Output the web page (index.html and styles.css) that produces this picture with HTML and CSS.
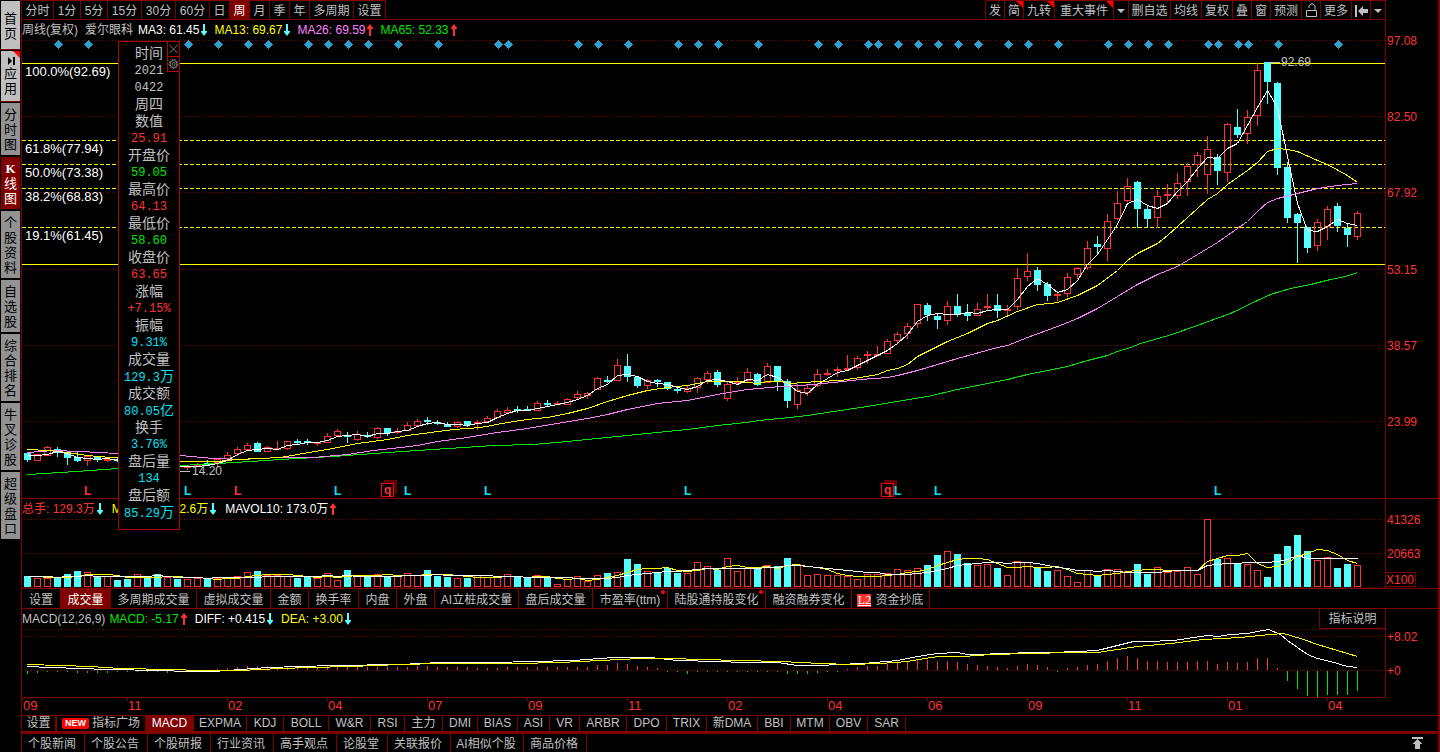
FILE: index.html
```html
<!DOCTYPE html>
<html lang="zh-CN">
<head>
<meta charset="utf-8">
<title>爱尔眼科 周线</title>
<link rel="stylesheet" href="styles.css">
</head>
<body>
<svg class="defs" aria-hidden="true">
  <symbol id="down" viewBox="0 0 7 12"><path d="M3 0h2v7h2v1l-3 4-3-4V7h2z" fill="#54ffff"/></symbol>
  <symbol id="up" viewBox="0 0 7 12"><path d="M3 12h2V5h2V4L4 0 1 4v1h2z" fill="#ff3232"/></symbol>
</svg>
<div class="app">
  <nav class="side">
    <button class="light">首页</button>
    <button class="light flag"><svg class="play" viewBox="0 0 8 8"><path d="M1 0l4 4-4 4zM6 0h2v8H6z"/></svg>应用</button>
    <button>分时图</button>
    <button class="on"><b>K</b>线图</button>
    <button>个股资料</button>
    <button>自选股</button>
    <button>综合排名</button>
    <button>牛叉诊股</button>
    <button>超级盘口</button>
  </nav>
  <main class="main">
    <header class="bar">
      <div class="periods">
        <button>分时</button><button>1分</button><button>5分</button><button>15分</button><button>30分</button><button>60分</button><button>日</button><button class="on">周</button><button>月</button><button>季</button><button>年</button><button>多周期</button><button>设置</button>
      </div>
      <div class="tools">
        <button>发</button><button class="flag">简</button><button class="flag">九转</button><button class="flag">重大事件</button><button aria-label="展开"><i class="caret"></i></button><button>删自选</button><button>均线</button><button>复权</button><button>叠</button><button>窗</button><button>预测</button><button aria-label="锁定"><svg width="13" height="15" viewBox="0 0 13 15"><path d="M4 5V3l2-2h2l2 2v5M1.500 7.500h10v6h-10z" fill="none" stroke="#c0c0c0"/></svg></button><button>更多</button><button aria-label="收起"><svg width="13" height="12" viewBox="0 0 13 12"><path d="M0 0h2v12H0zM3 6l5-5v3h5v4H8v3z" fill="#c0c0c0"/></svg></button><button aria-label="菜单"><i class="caret"></i></button>
      </div>
    </header>
    <div class="head ma">
      <span class="title">周线(复权)</span><span class="name">爱尔眼科</span>
      <span class="white">MA3: 61.45<svg><use href="#down"/></svg></span>
      <span class="yellow">MA13: 69.67<svg><use href="#down"/></svg></span>
      <span class="pink">MA26: 69.59<svg><use href="#up"/></svg></span>
      <span class="green">MA65: 52.33<svg><use href="#up"/></svg></span>
    </div>
    <div class="pane price"><svg id="price"></svg></div>
    <div class="head vol">
      <span class="red">总手: 129.3万<svg><use href="#down"/></svg></span>
      <span class="yellow">MAVOL5: 172.6万<svg><use href="#down"/></svg></span>
      <span class="white">MAVOL10: 173.0万<svg><use href="#up"/></svg></span>
    </div>
    <div class="pane volume"><svg id="volume"></svg></div>
    <div class="tabs first">
      <button>设置</button><button class="on">成交量</button><button>多周期成交量</button><button>虚拟成交量</button><button>金额</button><button>换手率</button><button>内盘</button><button>外盘</button><button>AI立桩成交量</button><button>盘后成交量</button><button class="dot">市盈率(ttm)</button><button class="dot">陆股通持股变化</button><button>融资融券变化</button><button><span class="l2">L2</span>资金抄底</button>
    </div>
    <div class="head osc">
      <span>MACD(12,26,9)</span>
      <span class="green">MACD: -5.17<svg><use href="#up"/></svg></span>
      <span class="white">DIFF: +0.415<svg><use href="#down"/></svg></span>
      <span class="yellow">DEA: +3.00<svg><use href="#down"/></svg></span>
      <button class="help">指标说明</button>
    </div>
    <div class="pane macd"><svg id="macd"></svg></div>
    <div class="tabs second">
      <button>设置</button><button><span class="new">NEW</span>指标广场</button><button class="on">MACD</button><button>EXPMA</button><button>KDJ</button><button>BOLL</button><button>W&amp;R</button><button>RSI</button><button>主力</button><button>DMI</button><button>BIAS</button><button>ASI</button><button>VR</button><button>ARBR</button><button>DPO</button><button>TRIX</button><button>新DMA</button><button>BBI</button><button>MTM</button><button>OBV</button><button>SAR</button>
    </div>
    <footer class="foot">
      <div class="news">
        <button>个股新闻</button><button>个股公告</button><button>个股研报</button><button>行业资讯</button><button>高手观点</button><button>论股堂</button><button>关联报价</button><button>AI相似个股</button><button>商品价格</button>
      </div>
      <button class="totop" aria-label="展开面板"><svg width="11" height="12" viewBox="0 0 11 12"><path d="M0 0h11v2H0zM5.500 2l5 5H8v5H3V7H.5z" fill="#c0c0c0"/></svg></button>
    </footer>
    <aside class="popup">
      <div class="corner">
        <button aria-label="关闭"><svg width="11" height="12" viewBox="0 0 11 12"><path d="M1.500 2l8 8M9.500 2l-8 8" stroke="#808080"/></svg></button>
        <button aria-label="设置"><svg width="11" height="12" viewBox="0 0 11 12" fill="none" stroke="#808080"><circle cx="5.500" cy="6" r="4.500" stroke-dasharray="2 1"/><circle cx="5.500" cy="6" r="3.500"/><circle cx="5.500" cy="6" r="1.500"/></svg></button>
      </div>
      <p>时间</p><p class="num">2021</p><p class="num">0422</p><p>周四</p>
      <p>数值</p><p class="num red">25.91</p>
      <p>开盘价</p><p class="num green">59.05</p>
      <p>最高价</p><p class="num red">64.13</p>
      <p>最低价</p><p class="num green">58.60</p>
      <p>收盘价</p><p class="num red">63.65</p>
      <p>涨幅</p><p class="num red">+7.15%</p>
      <p>振幅</p><p class="num cyan">9.31%</p>
      <p>成交量</p><p class="num cyan">129.3<span>万</span></p>
      <p>成交额</p><p class="num cyan">80.05<span>亿</span></p>
      <p>换手</p><p class="num cyan">3.76%</p>
      <p>盘后量</p><p class="num cyan">134</p>
      <p>盘后额</p><p class="num cyan">85.29<span>万</span></p>
    </aside>
  </main>
</div>
<script src="chart.js"></script>
</body>
</html>
```

FILE: styles.css
```css
* { box-sizing: border-box; }
body {
  margin: 0;
  background: #000;
  color: #c0c0c0;
  font: 12px/16px "Liberation Sans", "Noto Sans CJK SC", sans-serif;
}
.defs { position: absolute; width: 0; height: 0; }
button {
  margin: 0;
  padding: 0;
  border: 0;
  background: none;
  color: inherit;
  font: inherit;
  white-space: nowrap;
}
.app {
  display: flex;
  min-height: 100vh;
  border-right: 2px solid #800000;
}

/* sidebar */
.side {
  width: 21px;
  flex: none;
  display: flex;
  flex-direction: column;
  gap: 2px;
  padding: 1px 1px 0;
}
.side button {
  display: flex;
  flex-direction: column;
  align-items: center;
  width: 19px;
  padding: 4px 3px 3px;
  background: #929292;
  color: #000;
  font-size: 13px;
  line-height: 15px;
  white-space: normal;
  word-break: break-all;
}
.side button.light { background: #c0c0c0; padding: 10px 3px 8px; box-shadow: 0 1px #800000; }
.side button.light.flag { padding: 6px 3px 5px; }
.side button.on { background: #800000; color: #fff; }
.side b { font: bold 13px/15px "Liberation Serif", serif; }
.play { width: 8px; height: 8px; margin: 0 0 1px; }
.flag { position: relative; }
.flag::after {
  content: "";
  position: absolute;
  top: 0;
  right: 0;
  border-top: 7px solid #ff0000;
  border-left: 7px solid transparent;
}

.main {
  position: relative;
  flex: 1;
  min-width: 0;
  display: flex;
  flex-direction: column;
  border-left: 1px solid #800000;
}

/* top toolbar */
.bar {
  display: flex;
  justify-content: space-between;
  height: 20px;
  padding-right: 52px;
}
.periods, .tools { display: grid; border-bottom: 1px solid #800000; }
.periods {
  flex: 1;
  grid-template-columns: 32px 27px 27px 34px 34px 34px 20px 20px 20px 20px 20px 44px 32px;
}
.tools {
  grid-template-columns: 20px 19px 31px 59px 15px 42px 31px 31px 19px 19px 31px 19px 31px 19px 15px;
}
.bar button {
  display: flex;
  align-items: center;
  justify-content: center;
  padding-top: 1px;
  border-top: 1px solid #800000;
  border-right: 1px solid #800000;
}
.tools button:first-child { border-left: 1px solid #800000; }
.bar .on, .tabs .on { background: #800000; color: #fff; }
.caret {
  border: 4px solid transparent;
  border-top-color: #c0c0c0;
  border-bottom: 0;
}

/* readouts */
.head { display: flex; align-items: center; gap: 8px; white-space: nowrap; }
.head span { display: flex; align-items: center; gap: 1px; }
.head svg { width: 7px; height: 12px; }
.ma { height: 20px; gap: 7px; margin-right: 52px; border-right: 1px solid #800000; }
.ma .name { margin-right: -2px; }
.vol { height: 19px; gap: 9px; padding-top: 2px; border-top: 1px solid #800000; }
.osc { height: 21px; border-top: 1px solid #800000; }
.osc span:first-child { margin-right: -4px; }
.osc .help {
  align-self: stretch;
  width: 67px;
  margin-left: auto;
  margin-right: 52px;
  border: 1px solid #800000;
  border-top: 0;
}
.white { color: #fff; }
.yellow { color: #ffff00; }
.pink { color: #ff80ff; }
.green { color: #00e600; }
.red { color: #ff3232; }
.cyan { color: #02e2f4; }

/* plots */
.pane { min-height: 0; position: relative; }
.pane svg { position: absolute; inset: 0; width: 100%; height: 100%; overflow: visible; }
.price { flex: 458 1 0; }
.volume { flex: 71 1 0; }
.macd { flex: 86 1 0; }
.pane svg text { font-size: 12px; }
.pane svg text.level { font-size: 13px; }

/* indicator tabs */
.tabs { display: grid; border-top: 1px solid #800000; }
.tabs button { position: relative; border-right: 1px solid #800000; }
.first {
  height: 20px;
  grid-template-columns: 39px 50px 86px 74px 38px 50px 38px 38px 84px 74px 75px 98px 86px 78px;
}
.first button { padding-top: 2px; }
.second {
  height: 19px;
  border-bottom: 3px solid #800000;
  grid-template-columns: 35px 89px 48px 53px 37px 45px 42px 34px 38px 35px 40px 32px 30px 47px 40px 40px 51px 33px 39px 38px 38px;
}
.second button { line-height: 15px; }
.second button:first-child { border-right-width: 2px; }
.dot::after {
  content: "";
  position: absolute;
  top: 1px;
  right: 2px;
  width: 4px;
  height: 4px;
  border-radius: 50%;
  background: #ff0000;
}
.l2 {
  display: inline-block;
  width: 14px;
  margin-right: 4px;
  background: #ff3232;
  color: #fff;
  font-family: "Liberation Serif", serif;
  line-height: 13px;
  text-decoration: underline;
}
.new {
  display: inline-block;
  width: 27px;
  margin-right: 3px;
  border-radius: 2px;
  background: #ff0000;
  color: #fff;
  font: bold 9px/11px "Liberation Sans", sans-serif;
  vertical-align: 1px;
}

.foot { display: flex; justify-content: space-between; height: 18px; }
.news {
  display: grid;
  grid-template-columns: 63px 63px 63px 63px 63px 51px 63px 73px 63px;
}
.news button { padding: 2px 2px 0 0; border-right: 1px solid #800000; }
.totop { display: flex; align-items: center; margin-right: 15px; }

/* floating day readout */
.popup {
  position: absolute;
  left: 96px;
  top: 41px;
  width: 62px;
  padding: 3px 0 8px;
  border: 1px solid #b40000;
  background: #000;
  text-align: center;
}
.popup p { margin: 0; font-size: 14px; line-height: 17px; height: 17px; }
.popup .num { font-family: "Liberation Mono", "Noto Sans CJK SC", monospace; font-size: 12px; line-height: 19px; }
.popup .num span { font-size: 14px; }
.corner {
  position: absolute;
  top: -1px;
  right: -1px;
  display: flex;
  flex-direction: column;
}
.corner button {
  display: flex;
  padding: 1px 0;
  border: 1px solid #b40000;
  margin-bottom: -1px;
}
```

FILE: chart.js
```js
const NS = 'http://www.w3.org/2000/svg';
const X0 = 22, X1 = 1385, FULL = 1416;
const RED = '#ff3232', CYAN = '#54ffff', DARK = '#800000', YELLOW = '#ffff00', PINK = '#ff80ff', GREEN = '#00e600';

/* direction, high, body top, body bottom, low */
const candles = `D 452 453 460 462|U 454 454 460 461|U 446 447 455 456|D 447 449 453 457|D 451 452 458 465|D 451 457 461 462|U 455 456 460 466|D 457 457 460 462|U 457 459 460 462|D 458 459 461 462
D 458 460 462 463|U 459 461 463 464|D 460 461 464 465|D 462 464 466 467|U 463 465 466 468|D 464 465 467 470|U 465 466 467 470|U 463 464 465 466|D 460 463 465 466|U 458 459 462 467
U 452 455 458 460|U 447 449 453 456|U 443 445 449 450|D 442 443 452 452|U 446 447 451 452|U 441 448 448 448|U 441 441 448 450|D 439 441 443 444|D 439 441 442 445|U 442 442 442 446
U 433 436 442 443|U 429 431 435 437|D 432 435 437 443|U 431 434 439 441|D 432 435 437 438|U 427 428 437 439|D 428 428 433 436|U 428 431 432 434|U 422 425 430 430|U 419 421 425 427
D 417 420 422 425|D 420 422 423 425|D 422 424 427 427|U 421 422 426 428|D 421 421 425 427|U 420 422 423 430|U 416 418 421 421|U 409 411 417 418|U 407 410 412 413|D 406 409 410 413
D 406 409 410 411|U 401 403 410 411|D 400 403 405 407|U 401 403 404 405|U 398 399 404 405|U 391 394 397 399|U 392 393 395 399|U 377 378 389 390|D 376 380 381 383|U 359 365 380 381
D 354 366 377 382|D 376 377 386 388|U 379 380 385 389|D 379 380 382 387|D 382 382 389 390|D 387 389 391 393|U 386 388 391 393|U 377 378 387 393|U 371 373 379 384|D 370 372 385 387
U 382 384 398 401|U 377 382 383 385|U 368 372 380 382|D 373 374 385 386|U 363 366 382 383|D 366 366 381 391|D 379 381 401 408|U 384 390 404 409|U 384 388 392 396|U 369 374 385 387
U 369 373 374 376|U 367 369 370 377|U 355 368 369 370|U 356 358 367 370|U 351 354 355 364|U 346 354 354 356|U 339 341 353 354|U 332 334 340 343|U 323 326 333 339|U 304 304 323 328
D 303 305 315 321|D 314 316 320 329|U 301 306 320 325|D 294 306 315 317|D 304 313 316 321|U 303 309 315 316|U 294 306 307 310|D 294 305 311 318|U 305 309 310 315|U 268 278 306 310
U 253 271 276 281|D 267 270 285 291|D 282 284 296 301|U 291 294 295 301|U 273 277 293 297|U 267 268 274 279|U 241 248 267 270|D 236 244 247 254|U 214 221 248 261|U 191 203 218 220
U 178 186 200 202|D 181 182 209 228|D 205 209 219 227|U 190 196 217 228|U 184 194 195 203|U 173 183 195 199|U 163 166 181 196|U 152 155 164 177|U 136 149 174 194|D 154 157 171 185
U 123 124 172 182|D 109 127 135 138|U 110 117 133 144|U 63 70 115 126|D 62 62 82 104|D 82 83 168 175|D 162 167 218 223|D 213 214 223 263|D 227 227 248 253|U 219 222 245 251
U 206 209 226 240|D 203 206 226 232|D 224 228 235 247|U 211 213 236 240`.split(/[|\n]/).map(r => {
  const p = r.split(' ');
  return { up: p[0] === 'U', hi: +p[1], top: +p[2], bot: +p[3], lo: +p[4] };
});

/* volume bar heights */
const volume = [11,9,9,10,13,16,15,10,11,7,8,13,10,13,10,8,8,9,8,9,10,11,15,16,12,12,11,9,10,9,14,7,17,11,11,13,11,12,14,12,17,11,10,9,9,12,10,10,13,10,9,12,9,3,8,11,6,12,14,15,28,23,16,15,19,14,14,25,21,17,29,16,19,19,22,21,29,23,12,13,12,12,11,8,13,13,14,18,17,19,22,32,36,33,24,22,23,19,12,26,25,20,16,17,11,5,17,12,18,18,16,23,13,20,15,16,20,13,68,28,29,23,23,17,10,33,41,52,36,27,30,19,23,22];

/* MACD histogram heights */
const hist = [-3,-2,-1,-1,-1,-2,-2,-2,-2,-1,-1,-1,-1,-1,-2,-1,-1,-1,-1,1,2,3,4,4,4,3,4,3,4,3,4,5,4,4,3,3,3,3,3,4,4,3,3,3,3,2,2,2,3,3,3,3,3,3,3,3,3,5,5,7,6,4,3,2,-1,-1,-3,-1,-1,-1,-1,-1,-1,-1,-1,-1,-3,-3,-3,-2,-1,-1,1,3,4,4,6,7,9,11,10,9,9,8,6,5,4,3,2,4,6,5,3,-1,2,3,5,6,9,12,14,12,9,9,8,8,8,9,9,6,8,7,8,12,12,2,-10,-18,-25,-26,-24,-24,-24,-20];

const lines = {
  ma13: [27,449,47,450,67,452,87,455,110,457,180,461,217,461,237,459,280,457,297,454,327,449,357,443,387,439,407,435,430,432,453,429,480,427,507,422,527,419,547,417,567,413,587,408,607,401,627,395,647,390,667,387,687,385,707,381,737,381,757,383,767,381,780,381,790,383,817,381,840,380,860,377,877,374,887,370,897,368,907,364,917,356,927,351,947,341,967,333,987,323,997,320,1017,311,1037,304,1050,303,1057,302,1077,295,1097,285,1117,270,1127,260,1137,253,1157,243,1167,235,1187,217,1207,199,1217,193,1227,184,1247,170,1257,162,1267,151,1277,148,1287,149,1297,151,1317,160,1327,164,1347,175,1357,182],
  ma26: [27,452,53,450,80,451,117,453,180,455,213,458,240,459,280,457,313,457,347,454,373,450,400,447,417,445,437,441,467,437,497,432,527,428,557,423,587,418,607,414,627,409,657,403,687,400,717,394,747,389,780,386,800,385,833,382,860,379,887,377,897,375,917,370,957,358,997,347,1007,345,1027,337,1057,326,1077,318,1097,308,1117,296,1137,284,1157,274,1177,266,1197,254,1217,242,1247,221,1257,211,1267,202,1277,198,1297,193,1317,188,1337,185,1347,184,1357,183],
  ma65: [27,474,60,472,90,470,118,468,180,465,217,463,250,461,280,459,333,456,373,453,417,450,463,447,493,445,533,444,567,441,607,437,647,433,687,429,717,425,737,423,767,419,780,418,807,415,833,411,867,406,897,401,927,396,957,389,987,383,1007,379,1027,374,1067,366,1087,360,1107,355,1117,351,1130,347,1140,343,1168,335,1197,325,1230,313,1257,300,1270,294,1290,288,1310,284,1330,279,1345,276,1357,272],
  diff: [27,666,50,667,80,668,107,669,160,670,187,671,213,671,240,669,267,667,300,666,333,665,400,664,440,662,480,662,492,662,533,661,573,660,613,657,650,657,677,660,717,661,743,662,777,662,797,665,820,665,837,664,863,663,897,660,917,656,937,653,957,652,967,654,1013,653,1023,652,1050,652,1077,651,1097,650,1113,646,1133,641,1147,641,1173,640,1207,635,1217,636,1230,634,1247,633,1257,631,1268,629,1280,634,1287,640,1297,647,1307,654,1317,658,1330,661,1347,666,1357,667],
  dea: [27,664,60,665,90,666,120,668,170,669,200,670,240,670,280,668,310,667,350,666,400,664,440,663,515,663,560,662,600,660,640,658,670,658,700,659,740,660,780,661,820,663,850,664,880,663,907,661,930,657,940,656,963,656,990,654,1030,653,1070,652,1097,652,1117,649,1137,646,1170,643,1203,639,1240,637,1270,634,1283,633,1300,638,1317,644,1337,650,1357,656]
};
const events = [58,88,188,218,248,268,308,328,348,368,398,438,498,508,578,598,628,678,698,718,758,818,838,868,878,898,918,938,958,978,1008,1028,1058,1108,1128,1148,1168,1208,1218,1238,1248,1278,1338];

const slot = i => 27 + i * 10;

function add(svg, name, attrs, text) {
  const el = document.createElementNS(NS, name);
  for (const k in attrs) el.setAttribute(k, attrs[k]);
  if (text !== undefined) el.textContent = text;
  svg.appendChild(el);
}

/* Scales plot units to the current size of the pane. */
function surface(id, top, height) {
  const svg = document.getElementById(id);
  svg.textContent = '';
  svg.setAttribute('shape-rendering', 'crispEdges');
  const sx = svg.clientWidth / FULL, sy = svg.clientHeight / height;
  const x = v => Math.round((v - X0) * sx), y = v => Math.round((v - top) * sy);
  return {
    rect: (a, b, w, h, fill) => add(svg, 'rect', { x: x(a), y: y(b), width: w, height: Math.max(1, y(b + h) - y(b)), fill }),
    box: (a, b, w, h, stroke, fill = 'none') => add(svg, 'rect', { x: x(a) + .5, y: y(b) + .5, width: w - 1, height: Math.max(1, y(b + h) - y(b) - 1), fill, stroke }),
    hline: (v, stroke, dash = 'none', a = X0, b = X1) => add(svg, 'path', { d: `M${x(a)} ${y(v) + .5}H${x(b)}`, stroke, 'stroke-dasharray': dash }),
    vline: (v, a, b, stroke) => add(svg, 'path', { d: `M${x(v) + .5} ${y(a)}V${y(b)}`, stroke }),
    curve: (pts, stroke) => {
      let d = '';
      for (let i = 0; i < pts.length; i += 2) d += `${x(pts[i]) + .5},${y(pts[i + 1]) + .5} `;
      add(svg, 'polyline', { points: d, fill: 'none', stroke });
    },
    text: (a, b, s, fill, extra = {}) => add(svg, 'text', { x: x(a), y: y(b), fill, ...extra }, s),
    diamond: (a, b) => add(svg, 'path', { d: `M${x(a) + .5} ${y(b) - 4}l4.500 4.500-4.500 4.500-4.500-4.500z`, fill: '#2f9fd0' })
  };
}

const average = (list, n) => list.flatMap((v, i) => {
  let sum = 0;
  for (let k = 0; k < n; k++) sum += list[Math.max(0, i - k)];
  return [slot(i), sum / n];
});

function drawPrice() {
  const s = surface('price', 40, 458);
  [40, 116, 192, 269, 345, 421].forEach((y, i) => {
    s.hline(y, DARK, '1 2');
    s.text(1387, y + 5, ['97.08', '82.50', '67.92', '53.15', '38.57', '23.99'][i], RED);
  });
  s.vline(X1, 40, 498, DARK);
  [63, 264].forEach(y => s.hline(y, YELLOW));
  [140, 164, 188, 227].forEach(y => s.hline(y, YELLOW, '4 2'));
  [[76, '100.0%(92.69)'], [153, '61.8%(77.94)'], [177, '50.0%(73.38)'], [201, '38.2%(68.83)'], [240, '19.1%(61.45)']]
    .forEach(([y, t]) => s.text(25, y, t, '#fff', { class: 'level' }));
  events.forEach(x => s.diamond(x, 44));
  candles.forEach((c, i) => {
    const x = slot(i), color = c.up ? RED : CYAN;
    if (c.up) {
      s.vline(x, c.hi, c.top, color);
      s.vline(x, c.bot + 1, c.lo, color);
      s.box(x - 3, c.top, 7, Math.max(2, c.bot - c.top + 1), color);
    } else {
      s.vline(x, c.hi, c.lo, color);
      s.rect(x - 3, c.top, 7, Math.max(2, c.bot - c.top), color);
    }
  });
  s.curve(lines.ma65, GREEN);
  s.curve(lines.ma26, PINK);
  s.curve(lines.ma13, YELLOW);
  const ma3 = average(candles.map(c => c.up ? c.top : c.bot), 3);
  ma3[1] = ma3[3] = 455;
  s.curve(ma3, '#fff');
  s.hline(62, '#c0c0c0', 'none', 1270, 1280);
  s.text(1281, 66, '92.69', '#c0c0c0');
  s.hline(471, '#c0c0c0', 'none', 180, 190);
  s.text(192, 475, '14.20', '#c0c0c0');
  const mark = { 'font-weight': 'bold' };
  [387, 887].forEach(x => {
    s.rect(x - 3, 480, 13, 14, '#600000');
    s.box(x - 6, 483, 13, 14, '#ff0000', '#000');
    s.text(x - 3, 494, 'q', RED, mark);
  });
  [87, 237].forEach(x => s.text(x - 3, 495, 'L', RED, mark));
  [187, 337, 407, 487, 687, 897, 937, 1217].forEach(x => s.text(x - 3, 495, 'L', '#02e2f4', mark));
}

function drawVolume() {
  const s = surface('volume', 517, 71);
  [519, 553, 587].forEach(y => s.hline(y, DARK, '1 2'));
  s.vline(X1, 499, 588, DARK);
  s.text(1387, 524, '41326', RED);
  s.text(1387, 558, '20663', RED);
  s.box(1385, 572, 31, 15, DARK);
  s.text(1386, 584, 'X100', RED);
  volume.forEach((h, i) => {
    if (candles[i].up) s.box(slot(i) - 3, 587 - h, 7, h, RED);
    else s.rect(slot(i) - 3, 587 - h, 7, h, CYAN);
  });
  const tops = volume.map(h => 587 - h);
  s.curve(average(tops, 5), YELLOW);
  s.curve(average(tops, 10), '#fff');
}

function drawMacd() {
  const s = surface('macd', 629, 86);
  [629, 636, 670].forEach(y => s.hline(y, DARK, '1 2'));
  s.vline(X1, 629, 697, DARK);
  s.hline(697, DARK, 'none', X0, X1 + 1);
  s.text(1387, 641, '+8.02', RED);
  s.text(1387, 675, '+0', RED);
  hist.forEach((h, i) => h > 0 ? s.vline(slot(i), 670 - h, 670, RED) : s.vline(slot(i), 671, 671 - h, GREEN));
  s.curve(lines.diff, '#fff');
  s.curve(lines.dea, YELLOW);
  ['09', '11', '02', '04', '07', '09', '11', '02', '04', '06', '09', '11', '01', '04'].forEach((t, i) => {
    const x = i ? 27 + i * 100 : 22;
    s.vline(x, 698, 701, DARK);
    s.text(x + 1, 710, t, RED, { class: 'level' });
  });
}

function draw() { drawPrice(); drawVolume(); drawMacd(); }
draw();
addEventListener('resize', draw);
```
